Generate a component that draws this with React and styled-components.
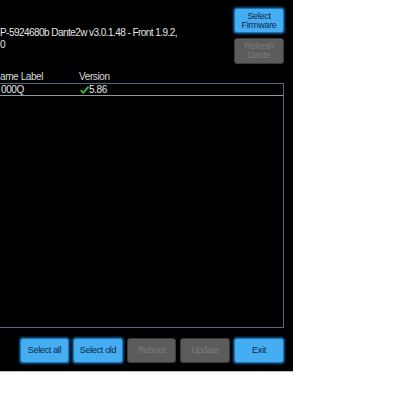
import React from "react";
import styled, { createGlobalStyle } from "styled-components";

const GlobalStyle = createGlobalStyle`
  html, body {
    margin: 0;
    padding: 0;
    background: #fff;
  }
  body {
    font-family: "Liberation Sans", Arial, sans-serif;
  }
`;

const Page = styled.div`
  width: 400px;
  height: 400px;
  overflow: hidden;
  background: #fff;
`;

const Panel = styled.div`
  width: 293px;
  height: 372px;
  box-sizing: border-box;
  background: #000;
  border-bottom: 1px solid #bdbdbd;
  padding: 8px 9px 8px 0;
  display: flex;
  flex-direction: column;
  overflow: hidden;
  color: #e6e6e6;
`;

const TopRow = styled.div`
  display: flex;
  justify-content: space-between;
`;

const Info = styled.div`
  padding-top: 19px;
  font-size: 10px;
  line-height: 12px;
  letter-spacing: -0.55px;
  white-space: nowrap;
`;

const SideButtons = styled.div`
  display: flex;
  flex-direction: column;
  gap: 5px;
  width: 50px;
  margin-right: 0;
`;

const Button = styled.div`
  box-sizing: border-box;
  height: ${(p) => (p.tall ? "26px" : "25px")};
  width: ${(p) => p.w || 50}px;
  border-radius: 3px;
  display: flex;
  align-items: center;
  justify-content: center;
  text-align: center;
  font-size: 9px;
  line-height: 9px;
  letter-spacing: -0.3px;
  background: ${(p) => (p.off ? "#5b5b5b" : "#45aef2")};
  color: ${(p) => (p.off ? "#7c7c7c" : "#0d2747")};
  border: 1px solid ${(p) => (p.off ? "#3c3c3c" : "#1f6eae")};
  box-shadow: ${(p) => (p.off ? "none" : "0 0 2px 1px #10528a")};
`;

const Header = styled.div`
  display: flex;
  margin-top: 7px;
  font-size: 10px;
  line-height: 12px;
  letter-spacing: -0.4px;
  color: #dcdcdc;
`;

const LabelCol = styled.div`
  width: 79px;
  white-space: nowrap;
`;

const TableBox = styled.div`
  flex: 1;
  margin-left: -2px;
  border: 1px solid #4d6a82;
`;

const Row = styled.div`
  display: flex;
  align-items: center;
  height: 11px;
  padding-left: 2px;
  border-bottom: 1px solid #8c98a3;
  font-size: 10px;
  letter-spacing: -0.4px;
  color: #e6e6e6;
`;

const Version = styled.div`
  display: flex;
  align-items: center;
  gap: 0;
`;

const Footer = styled.div`
  display: flex;
  justify-content: flex-end;
  gap: 4px;
  margin-top: 10px;
`;

function Check() {
  return (
    <svg width="9" height="8" viewBox="0 0 9 8">
      <path d="M0.8 4.2 L3.2 6.8 L8.4 0.8" fill="none" stroke="#35c43a" strokeWidth="1.8" />
    </svg>
  );
}

export default function App() {
  return (
    <Page>
      <GlobalStyle />
      <Panel>
        <TopRow>
          <Info>
            <div>P-5924680b Dante2w v3.0.1.48 - Front 1.9.2,</div>
            <div>0</div>
          </Info>
          <SideButtons>
            <Button>
              Select
              <br />
              Firmware
            </Button>
            <Button off tall>
              Refresh
              <br />
              Dante
            </Button>
          </SideButtons>
        </TopRow>
        <Header>
          <LabelCol>ame Label</LabelCol>
          <div>Version</div>
        </Header>
        <TableBox>
          <Row>
            <LabelCol>000Q</LabelCol>
            <Version>
              <Check />
              5.86
            </Version>
          </Row>
        </TableBox>
        <Footer>
          <Button w={49}>Select all</Button>
          <Button>Select old</Button>
          <Button off w={49}>Reboot</Button>
          <Button off>Update</Button>
          <Button>Exit</Button>
        </Footer>
      </Panel>
    </Page>
  );
}
